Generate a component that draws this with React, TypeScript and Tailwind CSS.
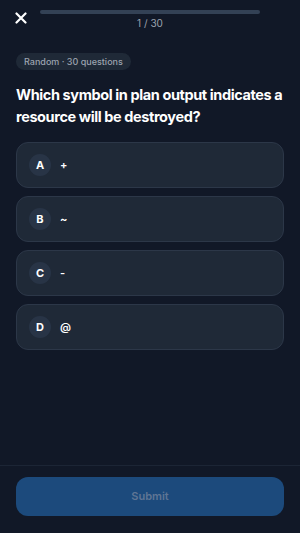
import React from "react";

const options = [
  { k: "A", t: "+" },
  { k: "B", t: "~" },
  { k: "C", t: "-" },
  { k: "D", t: "@" },
];

export default function App() {
  return (
    <div
      className="w-[300px] h-[533px] bg-[#111827] flex flex-col text-white"
      style={{ fontFamily: "Inter, 'Noto Sans', sans-serif" }}
    >
      <div className="flex items-start h-[30px]">
        <div className="w-[40px] flex justify-center pt-[12px] pl-[1px]">
          <svg width="12" height="12" viewBox="0 0 12 12">
            <path d="M1.5 1.5 L10.5 10.5 M10.5 1.5 L1.5 10.5" stroke="#ffffff" strokeWidth="2.2" strokeLinecap="round" />
          </svg>
        </div>
        <div className="flex-1 flex flex-col items-center pt-[10px]">
          <div className="w-full h-[4px] rounded-full bg-[#334155]" />
          <div className="text-[10px] leading-[12px] mt-[3px] text-[#9ca3af]">1 / 30</div>
        </div>
        <div className="w-[40px]" />
      </div>

      <div className="px-4 pt-[23px]">
        <div className="flex w-fit items-center h-[17px] px-[8px] rounded-full bg-[#1f2937] text-[9px] font-medium text-[#9ca3af]">
          Random · 30 questions
        </div>
        <h1 className="mt-[14px] text-[14.5px] leading-[22px] font-bold tracking-[-0.4px] text-white">
          Which symbol in plan output indicates a resource will be destroyed?
        </h1>
      </div>

      <div className="px-4 mt-[14px] flex flex-col gap-[8px]">
        {options.map((o) => (
          <div
            key={o.k}
            className="h-[46px] rounded-xl bg-[#1f2937] border border-[#2c3748] flex items-center px-[12px] gap-[9px]"
          >
            <div className="w-[22px] h-[22px] rounded-full bg-[#283446] flex items-center justify-center text-[11px] font-bold">
              {o.k}
            </div>
            <div className="text-[11px] font-semibold">{o.t}</div>
          </div>
        ))}
      </div>

      <div className="flex-1" />

      <div className="border-t border-[#1c2535] px-4 pt-[11px] pb-[17px]">
        <button className="w-full h-[39px] rounded-xl bg-[#1c4a7c] text-[11px] font-semibold text-[#5f7594]">
          Submit
        </button>
      </div>
    </div>
  );
}
